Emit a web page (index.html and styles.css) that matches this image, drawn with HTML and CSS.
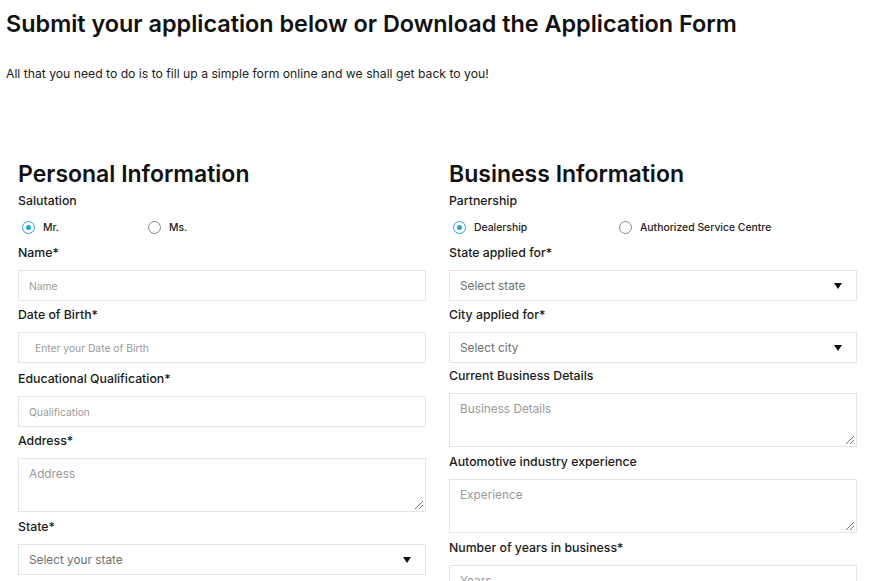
FILE: index.html
```html
<!DOCTYPE html>
<html>
<head>
<meta charset="utf-8">
<link rel="stylesheet" href="styles.css">
</head>
<body>
<div class="page">
  <h1 class="title">Submit your application below or Download the Application Form</h1>
  <p class="intro">All that you need to do is to fill up a simple form online and we shall get back to you!</p>
  <div class="columns">
    <section class="col">
      <h2 class="sec-title">Personal Information</h2>
      <div class="lbl first">Salutation</div>
      <div class="radios">
        <label class="opt w-left"><span class="radio on"></span>Mr.</label>
        <label class="opt"><span class="radio"></span>Ms.</label>
      </div>
      <div class="lbl">Name*</div>
      <div class="box"><span class="ph">Name</span></div>
      <div class="lbl m6">Date of Birth*</div>
      <div class="box date"><span class="ph">Enter your Date of Birth</span></div>
      <div class="lbl m8">Educational Qualification*</div>
      <div class="box"><span class="ph">Qualification</span></div>
      <div class="lbl m6">Address*</div>
      <div class="box area"><span class="ph big">Address</span><span class="grip"></span></div>
      <div class="lbl">State*</div>
      <div class="box sel"><span class="ph sv">Select your state</span><span class="caret"></span></div>
    </section>
    <section class="col">
      <h2 class="sec-title">Business Information</h2>
      <div class="lbl first">Partnership</div>
      <div class="radios">
        <label class="opt w-right"><span class="radio on"></span>Dealership</label>
        <label class="opt"><span class="radio"></span>Authorized Service Centre</label>
      </div>
      <div class="lbl">State applied for*</div>
      <div class="box sel"><span class="ph sv">Select state</span><span class="caret"></span></div>
      <div class="lbl m6">City applied for*</div>
      <div class="box sel"><span class="ph sv">Select city</span><span class="caret"></span></div>
      <div class="lbl m5">Current Business Details</div>
      <div class="box area"><span class="ph big">Business Details</span><span class="grip"></span></div>
      <div class="lbl">Automotive industry experience</div>
      <div class="box area"><span class="ph big">Experience</span><span class="grip"></span></div>
      <div class="lbl">Number of years in business*</div>
      <div class="box"><span class="ph big">Years</span></div>
    </section>
  </div>
</div>
</body>
</html>
```
FILE: styles.css
```css
html, body { margin: 0; padding: 0; background: #fff; }
body { font-family: "Inter", "Liberation Sans", sans-serif; color: #111; }
.page { padding: 0 6px; height: 581px; overflow: hidden; }
.title { margin: 0; padding-top: 9px; font-size: 23.4px; line-height: 29px; font-weight: 600; color: #111; }
.intro { margin: 28px 0 0; font-size: 12.2px; line-height: 16px; color: #222; }
.columns { display: grid; grid-template-columns: 408px 408px; column-gap: 23px; padding: 0 12px; margin-top: 79px; }
.col { display: flex; flex-direction: column; }
.sec-title { margin: 0; font-size: 23px; line-height: 26px; font-weight: 600; color: #111; }
.lbl { font-size: 12.3px; line-height: 16px; font-weight: 500; color: #1a1a1a; margin: 7px 0 9px; }
.lbl.m5 { margin-top: 5px; }
.lbl.m6 { margin-top: 6px; }
.lbl.m8 { margin-top: 8px; }
.lbl.first { margin: 6px 0 0; }
.radios { display: flex; align-items: center; height: 18px; margin: 9px 0 2px; font-size: 10.4px; font-weight: 500; color: #222; }
.opt { display: flex; align-items: center; }
.w-left { width: 130px; }
.w-right { width: 170px; }
.radio { width: 11px; height: 11px; border: 1px solid #888; border-radius: 50%; margin: 0 8px 0 0; box-sizing: content-box; position: relative; }
.radio.on { border-color: #2a9fd6; margin-left: 4px; }
.radio.on::after { content: ""; position: absolute; left: 3px; top: 3px; width: 5px; height: 5px; border-radius: 50%; background: #2a9fd6; }
.box { height: 31px; box-sizing: border-box; border: 1px solid #e4e4e4; display: flex; align-items: center; padding: 0 10px; position: relative; background: #fff; }
.box.date { padding-left: 16px; }
.box.area { height: 54px; align-items: flex-start; padding-top: 8px; }
.ph { font-size: 10.3px; color: #9a9a9a; }
.ph.big, .ph.sv { font-size: 11.8px; }
.ph.sv { color: #6f6f6f; }
.sel { justify-content: space-between; }
.caret { width: 0; height: 0; border-left: 4px solid transparent; border-right: 4px solid transparent; border-top: 6px solid #111; margin-right: 4px; }
.grip { position: absolute; right: 2px; bottom: 2px; width: 8px; height: 8px; background: linear-gradient(135deg, transparent 45%, #777 45%, #777 55%, transparent 55%, transparent 70%, #777 70%, #777 80%, transparent 80%); }
```
